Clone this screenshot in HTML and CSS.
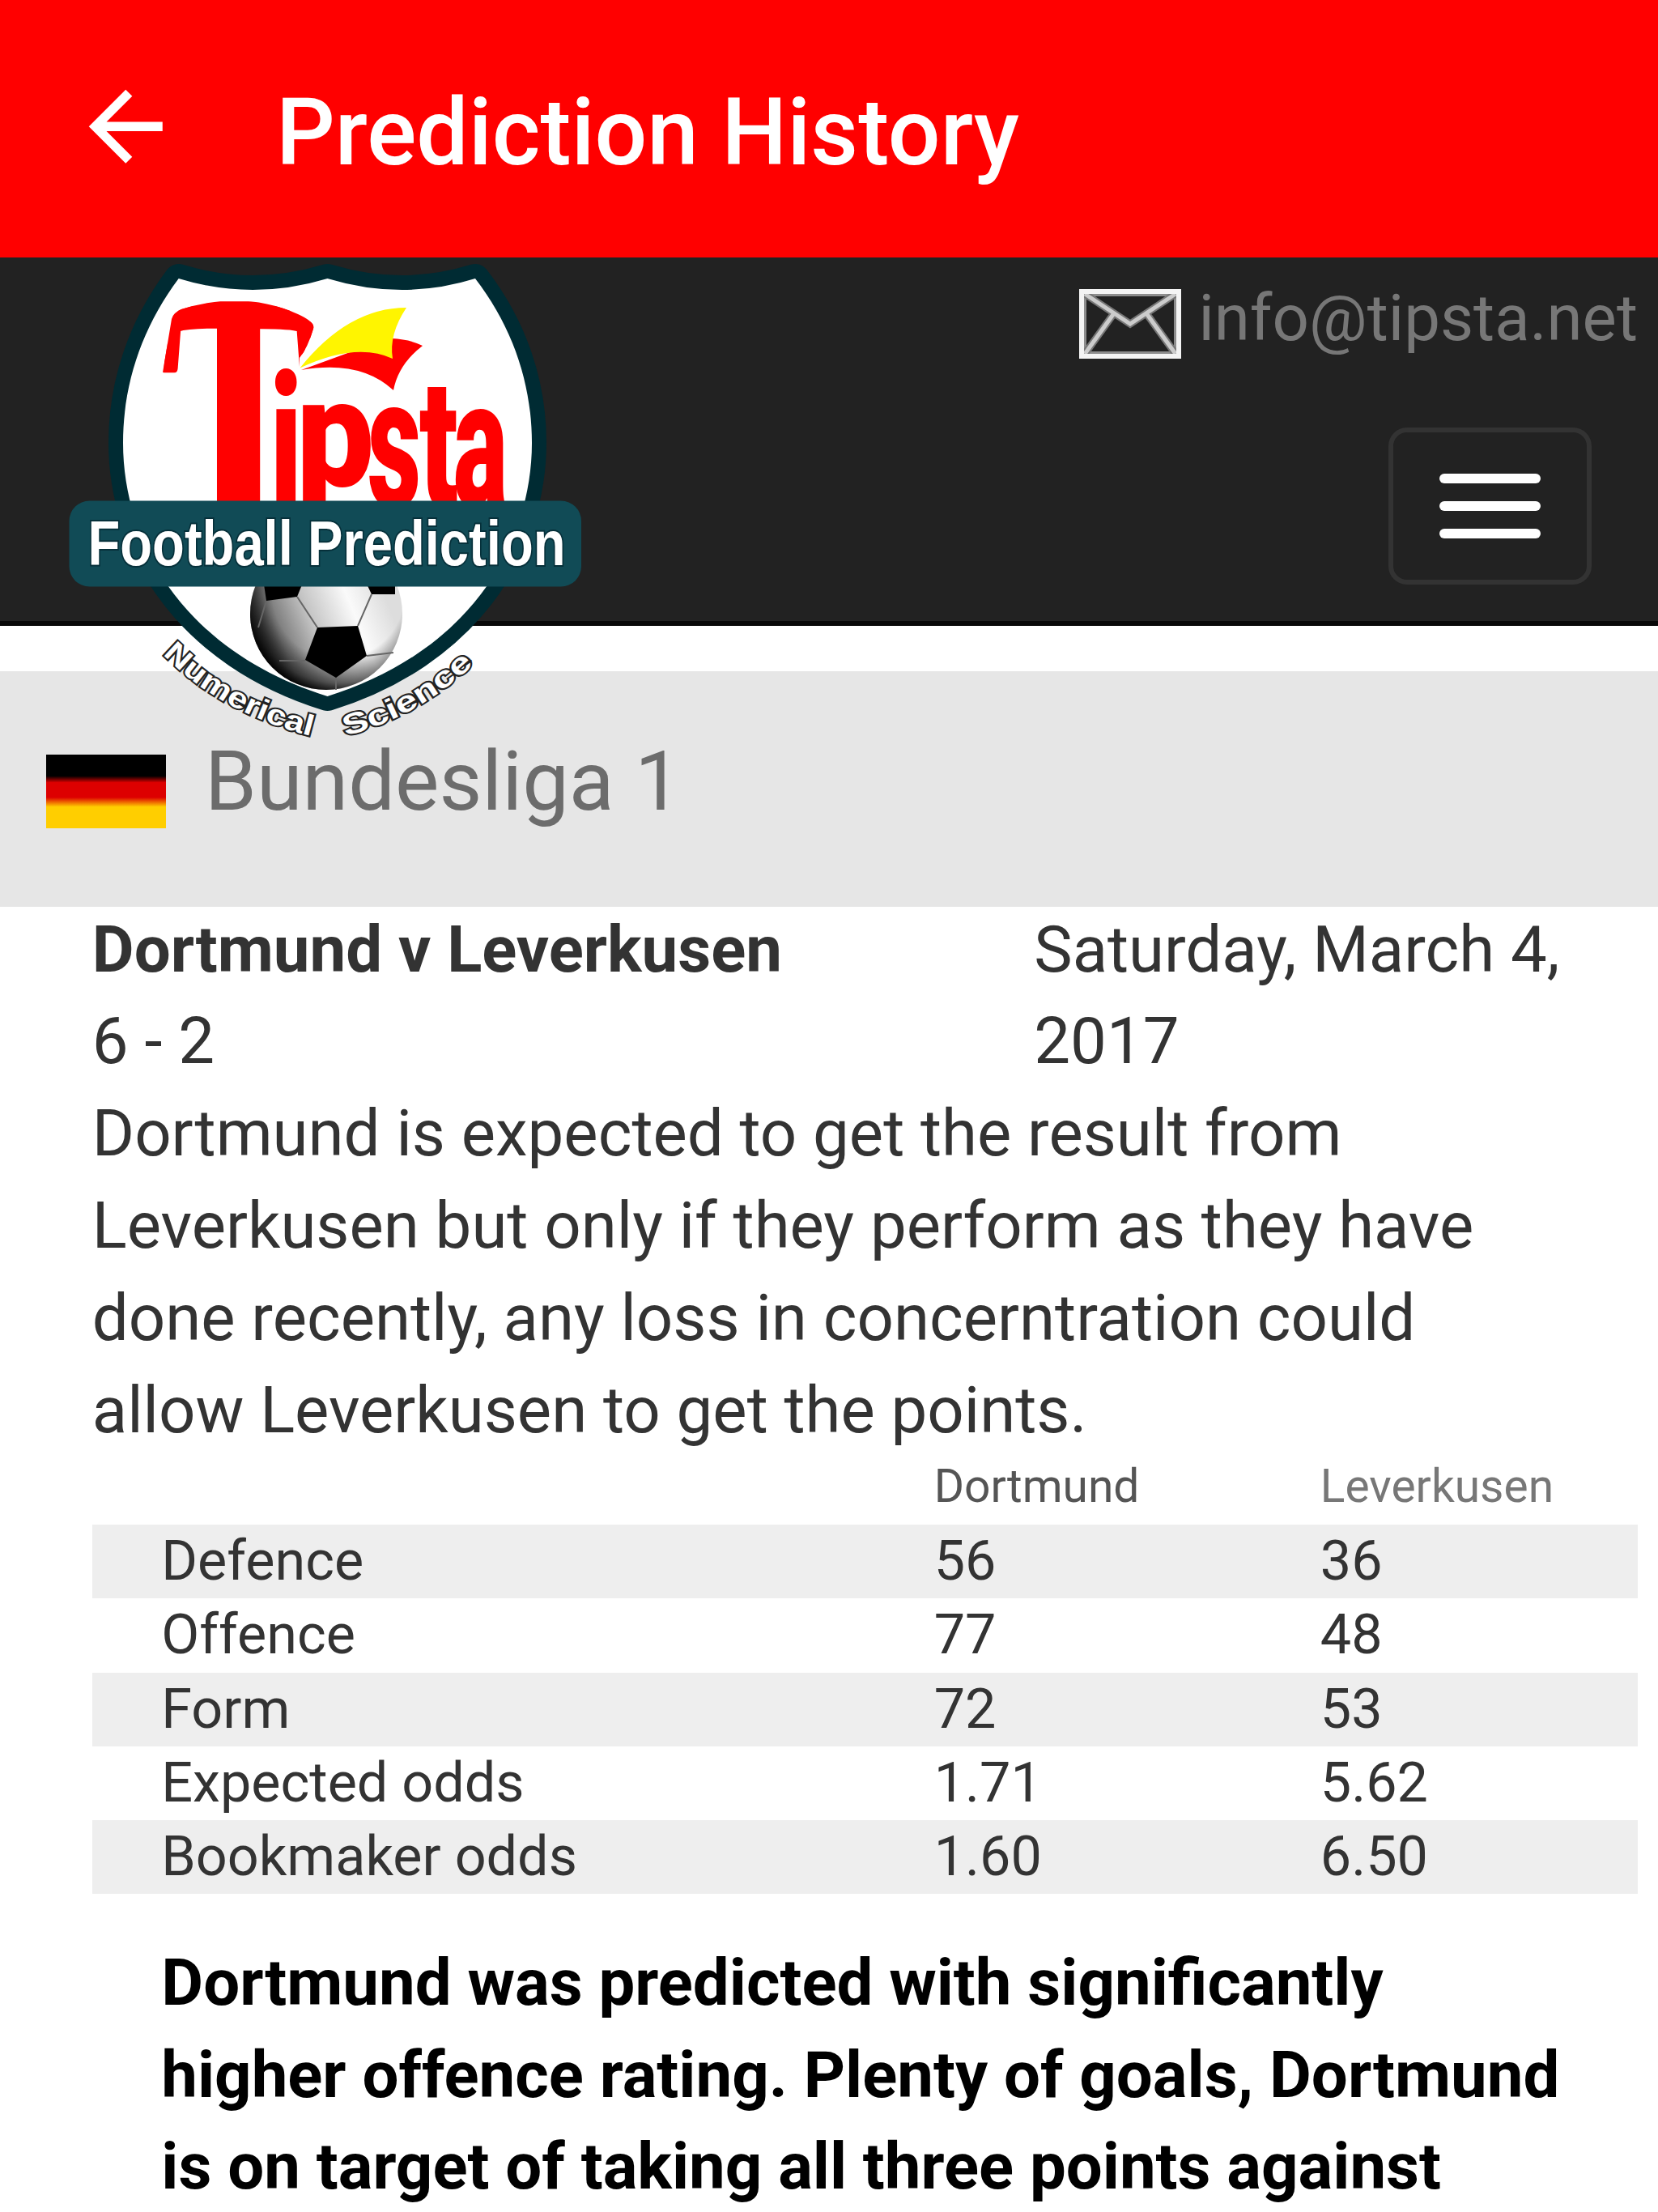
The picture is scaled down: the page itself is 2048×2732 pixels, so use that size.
FILE: index.html
```html
<!DOCTYPE html>
<html lang="en">
<head>
<meta charset="utf-8">
<title>Prediction History</title>
<link rel="stylesheet" href="styles.css">
</head>
<body>
<header class="app-bar">
  <svg class="back" viewBox="0 0 24 24"><path fill="#fff" d="M20 11H7.83l5.59-5.59L12 4l-8 8 8 8 1.41-1.41L7.83 13H20z"/></svg>
  <h1 class="app-title">Prediction History</h1>
</header>

<nav class="navbar">
  <svg class="logo" viewBox="60 318 680 620">
    <defs>
      <clipPath id="above"><rect x="60" y="318" width="680" height="302"/></clipPath>
      <clipPath id="dome"><path d="M201 460L212 394Q214 386 224 382Q300 358 368 388Q390 398 387 406Q380 430 370 442V620H201Z"/></clipPath>
      <clipPath id="below"><rect x="60" y="722" width="680" height="200"/></clipPath>
      <linearGradient id="ballFill" x1="0" y1="0.65" x2="0.85" y2="0.3">
        <stop offset="0" stop-color="#111"/><stop offset="0.2" stop-color="#777"/><stop offset="0.45" stop-color="#c4c4c4"/><stop offset="0.75" stop-color="#fafafa"/><stop offset="1" stop-color="#ddd"/>
      </linearGradient>
      <radialGradient id="ballShade" cx="0.58" cy="0.36" r="0.66">
        <stop offset="0.66" stop-color="#000" stop-opacity="0"/><stop offset="0.9" stop-color="#000" stop-opacity="0.55"/><stop offset="1" stop-color="#000" stop-opacity="0.95"/>
      </radialGradient>
      <path id="arcLeft" d="M201 808Q274 882 388 910"/>
      <path id="arcRight" d="M427 909Q516 886 588 818"/>
    </defs>
    <path class="shield-edge" d="M220.700 344Q312 372 404.500 344Q497 372 587 344C634 405 657 475 657 547C657 610 637 672 602 723C555 790 485 835 404.500 860C324 835 254 790 207 723C172 672 152 610 152 547C152 475 175 405 220.700 344Z"/>
    <path class="shield-face" d="M220.700 344Q312 372 404.500 344Q497 372 587 344C634 405 657 475 657 547C657 610 637 672 602 723C555 790 485 835 404.500 860C324 835 254 790 207 723C172 672 152 610 152 547C152 475 175 405 220.700 344Z"/>
    <g clip-path="url(#above)" class="brand">
      <g clip-path="url(#dome)"><text class="brand-t" transform="translate(198 650) scale(.7 1)">T</text></g>
      <text class="brand-i" transform="translate(331 632) scale(.7 1)" font-size="240">i</text>
      <text transform="translate(366 601) scale(.9 1)" font-size="190">p</text>
      <text transform="translate(454 627) scale(.56 1)" font-size="230">s</text>
      <text transform="translate(518 626) scale(.62 1)" font-size="225">t</text>
      <text transform="translate(560 626) scale(.56 1)" font-size="225">a</text>
    </g>
    <path fill="#f00" d="M372 457Q445 444 486 482Q492 450 522 427Q506 419 484 418L446 430Z"/>
    <path fill="#fff500" d="M370.500 454.500Q430 380 502 380Q480 413 485 443Q440 422 370.500 454.500Z"/>
    <g clip-path="url(#below)">
      <circle cx="403" cy="758" r="94" fill="url(#ballFill)"/>
      <circle cx="403" cy="758" r="94" fill="url(#ballShade)"/>
      <path d="M392 775L442 773L453 810L415 837L377 815ZM325 715H376L367 737L329 742ZM450 715H488V734L459 734Z"/>
      <path class="seam" d="M367 737L392 775M459 734L442 773M453 810L486 806M377 816L345 816M415 837V852M329 742L319 775"/>
    </g>
    <rect x="85.500" y="618.500" width="632.500" height="106" rx="25" fill="#114b56"/>
    <text class="banner" x="108.500" y="698" textLength="590" lengthAdjust="spacingAndGlyphs">Football Prediction</text>
    <g class="motto">
      <text><textPath href="#arcLeft" textLength="212" lengthAdjust="spacingAndGlyphs">Numerical</textPath></text>
      <text><textPath href="#arcRight" textLength="183" lengthAdjust="spacingAndGlyphs">Science</textPath></text>
    </g>
  </svg>
  <div class="nav-side">
    <div class="mail">
      <svg class="envelope" viewBox="0 0 126 86">
        <g fill="none"><path stroke="#8d8d8d" stroke-width="4" d="M7 7H119V79H7Z"/><path stroke="#777" stroke-width="9" d="M7 6L63 43L119 6M7 80L43 30M119 80L83 30"/><path stroke="#ccc" stroke-width="5" d="M7 6L63 43L119 6M7 80L43 30M119 80L83 30"/><path stroke="#f4f4f4" stroke-width="6" d="M3 3H123V83H3Z"/></g>
      </svg>
      <span class="address">info@tipsta.net</span>
    </div>
    <div class="toggle"><i class="bar"></i><i class="bar"></i><i class="bar"></i></div>
  </div>
</nav>

<section class="league">
  <div class="flag"></div>
  <h4 class="league-name">Bundesliga 1</h4>
</section>

<main class="match">
  <div class="match-head">
    <div class="teams"><strong>Dortmund v Leverkusen</strong><br>6 - 2</div>
    <div class="date">Saturday, March 4, 2017</div>
  </div>
  <p class="summary">Dortmund is expected to get the result from Leverkusen but only if they perform as they have done recently, any loss in concerntration could allow Leverkusen to get the points.</p>
  <div class="stats">
    <div class="row names"><span></span><span class="home">Dortmund</span><span class="away">Leverkusen</span></div>
    <div class="row shaded"><span>Defence</span><span>56</span><span>36</span></div>
    <div class="row"><span>Offence</span><span>77</span><span>48</span></div>
    <div class="row shaded"><span>Form</span><span>72</span><span>53</span></div>
    <div class="row"><span>Expected odds</span><span>1.71</span><span>5.62</span></div>
    <div class="row shaded"><span>Bookmaker odds</span><span>1.60</span><span>6.50</span></div>
  </div>
  <p class="verdict">Dortmund was predicted with significantly higher offence rating. Plenty of goals, Dortmund is on target of taking all three points against</p>
</main>
</body>
</html>
```

FILE: styles.css
```css
* { box-sizing: border-box; }
body {
  margin: 0;
  width: 2048px;
  height: 2732px;
  overflow: hidden;
  background: #fff;
  color: #333;
  font: 79.75px/113.9px Roboto, sans-serif;
}
.app-bar {
  height: 318px;
  padding: 88px 0 0 86.5px;
  background: #f00;
  display: flex;
  align-items: flex-start;
}
.back { width: 136.5px; height: 136.5px; }
.app-title {
  margin: 6px 0 0 118px;
  color: #fff;
  font-size: 114.2px;
  line-height: 140px;
  font-weight: 500;
}
.navbar {
  height: 455px;
  background: #222;
  border-bottom: 6px solid #080808;
  padding-left: 60px;
  display: flex;
  justify-content: space-between;
  align-items: flex-start;
}
.logo { width: 680px; height: 620px; flex: none; position: relative; }
.shield-edge { fill: #002b33; stroke: #002b33; stroke-width: 36px; stroke-linejoin: round; }
.shield-face { fill: #fff; }
.brand { fill: #f00; font-family: Roboto, sans-serif; font-weight: 900; }
.brand-i { font-weight: 700; }
.brand-t { font-family: "Liberation Serif", serif; font-weight: 700; font-size: 415px; stroke: #f00; stroke-width: 12px; stroke-linejoin: round; }
.seam { fill: none; stroke: #666; stroke-width: 2px; }
.banner {
  font: bold 78px "Liberation Sans", sans-serif;
  fill: #fff;
  stroke: #06303a;
  stroke-width: 4px;
  paint-order: stroke;
}
.motto { font: bold 36px "Liberation Sans", sans-serif; fill: #fff; stroke: #222; stroke-width: 4px; paint-order: stroke; }
.nav-side { display: flex; flex-direction: column; align-items: flex-end; }
.mail { display: flex; padding: 39px 25px 0 0; height: 210px; }
.envelope { width: 126px; height: 86px; margin-right: 21.5px; }
.address { color: #777; margin-top: -21px; }
.toggle {
  width: 250.5px;
  height: 194px;
  margin-right: 82.5px;
  border: 6px solid #333;
  border-radius: 23px;
  display: flex;
  flex-direction: column;
  align-items: center;
  justify-content: center;
  gap: 22px;
}
.bar { width: 125px; height: 12.2px; border-radius: 6px; background: #fff; }
.league {
  margin-top: 56px;
  height: 291px;
  background: #e6e6e6;
  padding: 102.5px 0 0 57px;
  display: flex;
  align-items: flex-start;
}
.flag {
  width: 148px;
  height: 91px;
  background: linear-gradient(#000 29%, #d00 38%, #d00 58%, #ffce00 71%);
}
.league-name {
  margin: -22.5px 0 0 48px;
  font-size: 102.6px;
  line-height: 112.6px;
  font-weight: 400;
  color: #6c6c6c;
}
.match { margin-top: -4.5px; padding: 0 25.5px 0 113.8px; }
.match-head { display: grid; grid-template-columns: 1163.5px 1fr; }
.summary { margin: 0; width: 1820px; }
.row {
  display: grid;
  grid-template-columns: 50% 25% 25%;
  height: 91.1px;
  line-height: 91.1px;
  font-size: 68.3px;
}
.row span { padding-left: 85.5px; }
.shaded { background: #eee; }
.names { height: 84.4px; line-height: 73px; font-size: 56.9px; }
.home { color: #555; }
.away { color: #777; }
.verdict {
  margin: 52.8px 0 0 85.5px;
  width: 1740px;
  color: #000;
  font-weight: 700;
}
```
